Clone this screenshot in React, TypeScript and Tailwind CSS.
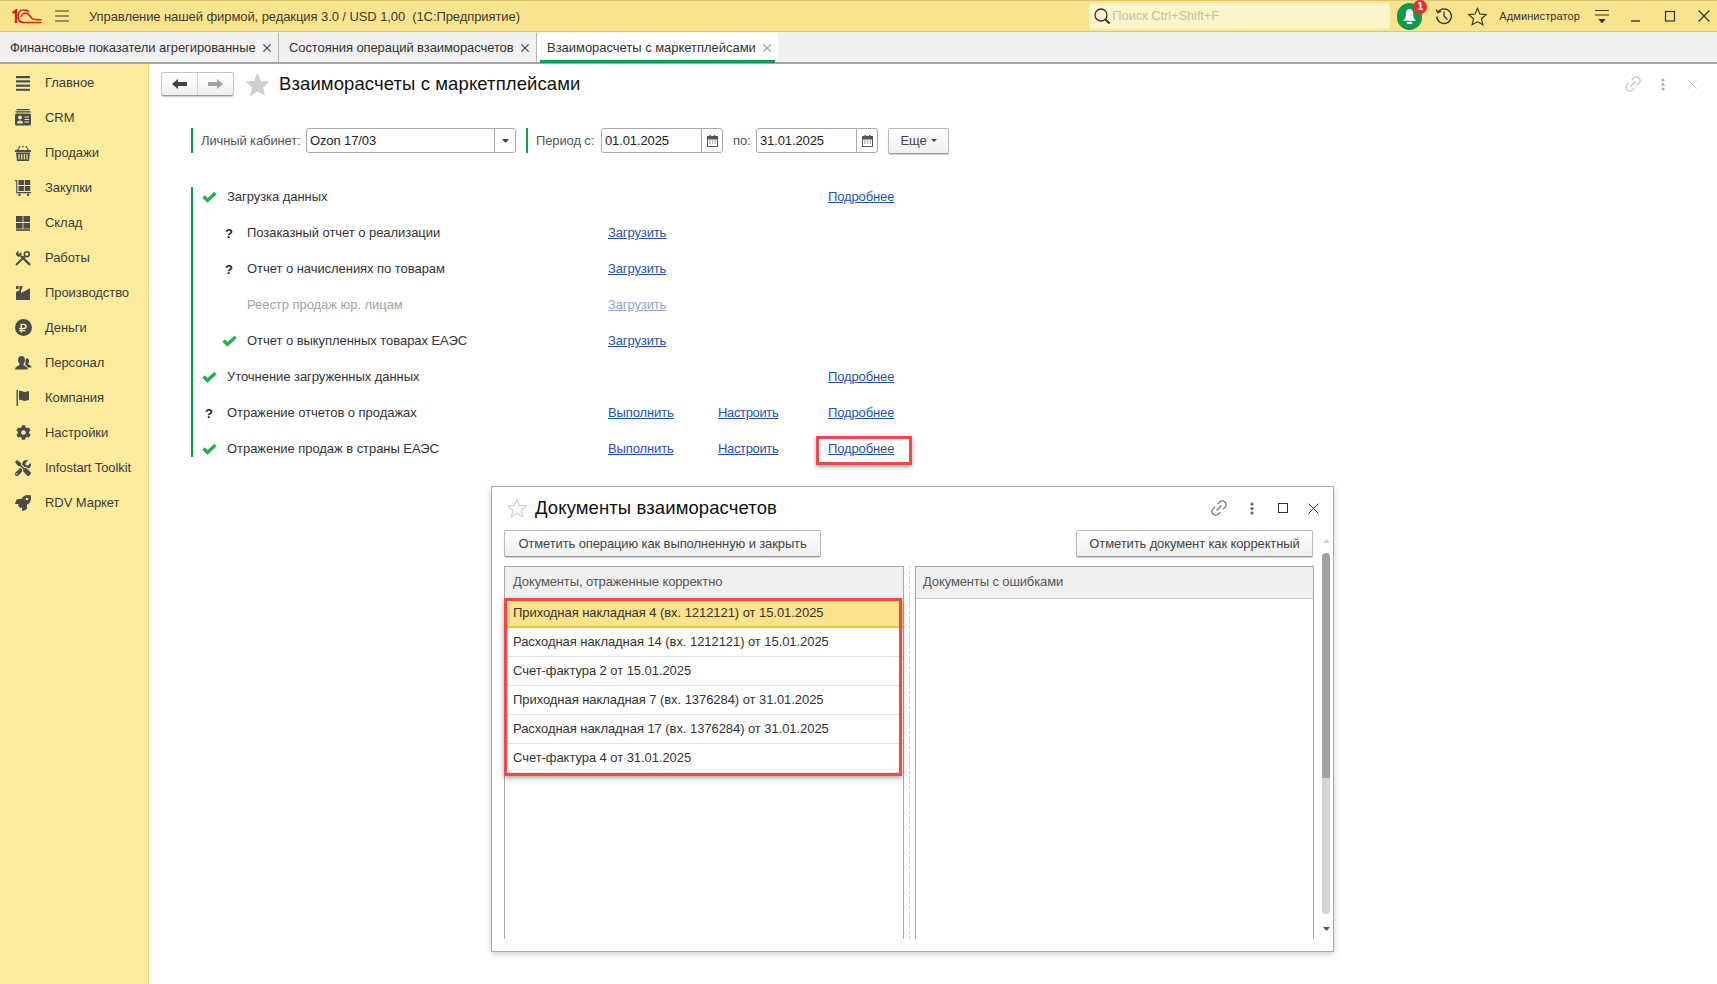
import React from 'react';
import { FaCog, FaTools, FaRocket, FaRubleSign } from 'react-icons/fa';

const ic = 'text-[#4b4b4b]';
const G = '#4b4b4b';
const Bars = () => (<svg width="16" height="16" viewBox="0 0 16 16" fill={G}><rect x="1" y="1" width="14" height="2.2"/><rect x="1" y="5.3" width="14" height="2.2"/><rect x="1" y="9.6" width="14" height="2.2"/><rect x="1" y="13.8" width="14" height="2"/></svg>);
const Card = () => (<svg width="16" height="17" viewBox="0 0 16 17" fill={G}><rect x="1.5" y="0" width="13" height="1.3"/><rect x="0.5" y="2.2" width="15" height="1.3"/><path d="M1.5 4.5h13a1.5 1.5 0 0 1 1.5 1.5v9a1.5 1.5 0 0 1-1.5 1.5h-13A1.5 1.5 0 0 1 0 15V6a1.5 1.5 0 0 1 1.5-1.5z"/><circle cx="5" cy="8.5" r="1.9" fill="#fbeb9c"/><path d="M2 14.5c0-2.2 1.4-3 3-3s3 .8 3 3z" fill="#fbeb9c"/><path d="M9.5 8h4.5M9.5 10.5h4.5M9.5 13h4.5" stroke="#fbeb9c" strokeWidth="1.2"/></svg>);
const Basket = () => (<svg width="16" height="16" viewBox="0 0 16 16" fill={G}><path d="M5.2 1L2.5 5.2M10.8 1l2.7 4.2" stroke={G} strokeWidth="1.2" fill="none"/><path d="M8 0.5l1 1-1 1-1-1z"/><rect x="0" y="5" width="16" height="2"/><path d="M1 7.5h14L14 16H2z"/><path d="M4 9v5.5M6.7 9v5.5M9.3 9v5.5M12 9v5.5" stroke="#fbeb9c" strokeWidth="1.2"/></svg>);
const Cart = () => (<svg width="16" height="16" viewBox="0 0 16 16" fill={G}><path d="M0 0h2.3v12H16v1.2H1.2V1.2H0z"/><rect x="3.5" y="0" width="5.4" height="5"/><rect x="9.8" y="0" width="5.4" height="5"/><rect x="3.5" y="6" width="5.4" height="5"/><rect x="9.8" y="6" width="5.4" height="5"/><circle cx="4.5" cy="14.8" r="1.2"/><circle cx="13" cy="14.8" r="1.2"/></svg>);
const Store = () => (<svg width="16" height="16" viewBox="0 0 16 16" fill={G}><rect x="1" y="1" width="6.6" height="6"/><rect x="8.4" y="1" width="6.6" height="6"/><rect x="1" y="8" width="6.6" height="5.6"/><rect x="8.4" y="8" width="6.6" height="5.6"/><rect x="1" y="14.2" width="14" height="1.6"/></svg>);
const Work = () => (<svg width="16" height="16" viewBox="0 0 16 16" fill="none" stroke={G}><path d="M1 15L10 6" strokeWidth="1.8"/><path d="M15 15L6 6" strokeWidth="2.4"/><circle cx="11.8" cy="4.2" r="2.4" strokeWidth="1.6"/><path d="M3.3 1.2a3 3 0 0 0-1.9 3.6a3 3 0 0 0 3.6 1.4a3 3 0 0 0 1-3.8L4.2 4.2 3 3.2z" fill={G} strokeWidth="0.6"/></svg>);
const Factory = () => (<svg width="16" height="16" viewBox="0 0 16 16" fill={G}><path d="M1 1h2.6v3H1zM4.5 1h3.2l-1 3.6-2.2 1.2z" /><path d="M1 15V7l5-2.6V8L15 3.2V15z"/></svg>);
const Ruble = () => (<span className="flex h-[17px] w-[17px] items-center justify-center rounded-full bg-[#4b4b4b] text-[#fbeb9c]"><FaRubleSign size={10} /></span>);
const People = () => (<svg width="17" height="16" viewBox="0 0 17 16" fill={G}><path d="M11.5 3.2a2.6 3 0 0 1 2.6 3c0 1-.5 2-1.1 2.6.2 1 3.3 1.6 3.6 3.6h-3.8c-.4-1.6-2-2.2-2.6-2.7 0-.7.3-1.4.3-2.1 0-1.3-.4-3 1-4.4z"/><path d="M6.5 1a3.4 4 0 0 1 3.4 4c0 1.6-.6 3-1.4 3.7v1c0 1 4.5 1.6 4.5 4.8H0c0-3.2 4.5-3.8 4.5-4.8v-1C3.7 8 3.1 6.6 3.1 5A3.4 4 0 0 1 6.5 1z"/></svg>);
const Flag = () => (<svg width="14" height="16" viewBox="0 0 14 16" fill={G}><rect x="0.5" y="0" width="1.4" height="16"/><path d="M3 1c2-.8 3.5 1 5.5 1 1.5 0 3-.8 4.5-1v9c-2 .3-3 .9-4.5.9-2 0-3.5-1.5-5.5-.9z"/></svg>);

const nav: [string, React.ReactNode][] = [
  ['Главное', <Bars />],
  ['CRM', <Card />],
  ['Продажи', <Basket />],
  ['Закупки', <Cart />],
  ['Склад', <Store />],
  ['Работы', <Work />],
  ['Производство', <Factory />],
  ['Деньги', <Ruble />],
  ['Персонал', <People />],
  ['Компания', <Flag />],
  ['Настройки', <FaCog size={15} className={ic} />],
  ['Infostart Toolkit', <FaTools size={16} className={ic} />],
  ['RDV Маркет', <FaRocket size={16} className={ic} />],
];

const Check = () => (<svg width="15" height="12" viewBox="0 0 15 12"><path d="M1.5 5.5L5.5 9.5L13.5 2" fill="none" stroke="#25b24a" strokeWidth="3.4" /></svg>);
const Q = () => <span className="text-[13px] font-bold leading-none text-[#222]">?</span>;
const Link = ({ children, dim, className = '' }: { children: React.ReactNode; dim?: boolean; className?: string }) => (
  <a className={`underline ${dim ? 'text-[#8aa6dc]' : 'text-[#1a56ad]'} ${className}`}>{children}</a>
);
const Calendar = () => (<svg width="11" height="12" viewBox="0 0 11 12"><rect x="0.5" y="1.5" width="10" height="10" fill="none" stroke="#555"/><rect x="0.5" y="1.5" width="10" height="3" fill="#555"/><rect x="2.5" y="0" width="1.4" height="3" fill="#555"/><rect x="7" y="0" width="1.4" height="3" fill="#555"/><path d="M2 6h1.5M4.8 6h1.5M7.6 6h1.5M2 8h1.5M4.8 8h1.5M7.6 8h1.5" stroke="#777"/></svg>);
const LinkIcon = ({ c }: { c: string }) => (<svg width="18" height="18" viewBox="0 0 18 18" fill="none" stroke={c} strokeWidth="1.1"><path d="M7.6 5.2l2.5-2.5a3.1 3.1 0 0 1 4.4 0l.8.8a3.1 3.1 0 0 1 0 4.4l-2.5 2.5"/><path d="M10.4 12.8l-2.5 2.5a3.1 3.1 0 0 1-4.4 0l-.8-.8a3.1 3.1 0 0 1 0-4.4l2.5-2.5"/><path d="M6.5 11.5l5-5"/></svg>);
const Dots = ({ c }: { c: string }) => (<svg width="4" height="13" viewBox="0 0 4 13" fill={c}><circle cx="2" cy="2" r="1.6"/><circle cx="2" cy="6.5" r="1.6"/><circle cx="2" cy="11" r="1.6"/></svg>);
const Cross = ({ c, s = 11, w = 1 }: { c: string; s?: number; w?: number }) => (<svg width={s} height={s} viewBox="0 0 11 11" stroke={c} strokeWidth={w}><path d="M.5.5l10 10M10.5.5l-10 10"/></svg>);
const Star = ({ s, fill, stroke }: { s: number; fill: string; stroke: string }) => (<svg width={s} height={s} viewBox="0 0 24 24" fill={fill} stroke={stroke} strokeWidth="1.4"><path d="M12 1.6l3.1 7.3 7.9.7-6 5.2 1.8 7.7L12 18.4l-6.8 4.1L7 14.8 1 9.6l7.9-.7z"/></svg>);

const Bar = ({ className = '' }: { className?: string }) => <div className={`w-[2px] self-stretch bg-[#0f9b55] ${className}`} />;

const Row = ({ icon, level, text, dim, a, b, c, dimA }: { icon?: React.ReactNode; level: 0 | 1; text: string; dim?: boolean; a?: string; b?: string; c?: string; dimA?: boolean }) => (
  <div className="flex h-9 items-center">
    <div className={`mr-[3px] flex w-[30px] shrink-0 items-center justify-center ${level === 0 ? '' : 'ml-[20px]'}`}>{icon}</div>
    <div className={`${level === 0 ? 'w-[381px]' : 'w-[361px]'} shrink-0 tracking-[-0.05px] ${dim ? 'text-[#a3a3a3]' : 'text-[#333]'}`}>{text}</div>
    <div className="w-[110px] shrink-0">{a && <Link dim={dimA}>{a}</Link>}</div>
    <div className="w-[110px] shrink-0">{b && <Link className="tracking-[-0.35px]">{b}</Link>}</div>
    <div>{c && <Link>{c}</Link>}</div>
  </div>
);

const Docs = [
  'Приходная накладная 4 (вх. 1212121) от 15.01.2025',
  'Расходная накладная 14 (вх. 1212121) от 15.01.2025',
  'Счет-фактура 2 от 15.01.2025',
  'Приходная накладная 7 (вх. 1376284) от 31.01.2025',
  'Расходная накладная 17 (вх. 1376284) от 31.01.2025',
  'Счет-фактура 4 от 31.01.2025',
];

const Tab = ({ text, w }: { text: string; w: string }) => (
  <div className={`flex h-full items-center justify-between border-r border-[#b5b5b5] pl-[10px] pr-[7px] ${w}`}>
    <span className="tracking-[-0.09px] text-[#333]">{text}</span>
    <Cross c="#444" s={8} w={1.6} />
  </div>
);

const Btn = ({ children, className = '' }: { children: React.ReactNode; className?: string }) => (
  <div className={`flex items-center justify-center rounded-[2px] border border-[#b9b9b9] border-b-[#9a9a9a] bg-gradient-to-b from-white to-[#efefef] text-[#444] shadow-[0_1px_1px_rgba(0,0,0,0.2)] ${className}`}>{children}</div>
);

const Field = ({ value, w, iconW, icon }: { value: string; w: string; iconW: string; icon: React.ReactNode }) => (
  <div className={`flex h-[25px] items-center rounded-[3px] border border-[#a9a9a9] bg-white ${w}`}>
    <div className="flex-1 pl-[3px] text-[#222]">{value}</div>
    <div className={`flex h-full items-center justify-center border-l border-[#a9a9a9] ${iconW}`}>{icon}</div>
  </div>
);

export default function App() {
  return (
    <div className="relative flex h-[984px] w-[1717px] flex-col overflow-hidden bg-white font-['Liberation_Sans',Arial,sans-serif] text-[13px] tracking-[-0.12px]">
      <header className="flex h-[32px] shrink-0 items-center border-t border-b border-t-[#dcc66a] border-b-[#d8c77c] bg-[#f9e48e]">
        <svg width="30" height="15" viewBox="0 0 30 15" className="ml-[12px]" fill="none" stroke="#d8201c">
          <path d="M0.5 4L4 1.5V14" strokeWidth="2.4"/>
          <path d="M17 3C15.5 1.5 13.5 1 11.5 1C8 1 6 3.5 6 7.5C6 11.5 8.5 13.5 12 13.5H29.5" strokeWidth="1.7"/>
          <path d="M9.5 8C9.5 5.5 11.5 4 13.5 4C17 4 17.5 7 19.5 9C20.7 10.3 23 10.8 29.5 10.8" strokeWidth="1.6"/>
        </svg>
        <svg width="14" height="12" viewBox="0 0 14 12" className="ml-[13px]" stroke="#3a3a3a" strokeWidth="1.2"><path d="M0 1h14M0 6h14M0 11h14"/></svg>
        <div className="ml-[20px] pt-[1px] tracking-[-0.08px] text-[#3a3a3a]">Управление нашей фирмой, редакция 3.0 / USD 1,00&nbsp; (1С:Предприятие)</div>
        <div className="ml-auto flex h-[26px] w-[301px] items-center rounded-[2px] bg-[#fdf5ca] pl-[4px] text-[#c4c0a8]">
          <svg width="18" height="18" viewBox="0 0 18 18" fill="none" stroke="#333" strokeWidth="1.3"><circle cx="8" cy="8" r="6"/><path d="M12.5 12.5L16.5 16.5" strokeWidth="2"/></svg>
          <span className="ml-[1px]">Поиск Ctrl+Shift+F</span>
        </div>
        <div className="relative ml-[7px] flex h-[27px] w-[25px] items-center justify-center rounded-full bg-[#0d9a4f]">
          <svg width="17" height="17" viewBox="0 0 15 16" fill="#fff"><path d="M7.5 1C4.8 1 4 3.5 4 6.5C4 9.5 3 11 1 12H14C12 11 11 9.5 11 6.5C11 3.5 10.2 1 7.5 1Z"/><rect x="5" y="13" width="5" height="2"/></svg>
          <span className="absolute right-[-5px] top-[-3px] flex h-[14px] w-[14px] items-center justify-center rounded-full bg-[#ee2a2a] text-[11px] font-bold text-white">1</span>
        </div>
        <svg width="18" height="18" viewBox="0 0 18 18" className="ml-[13px]" fill="none" stroke="#333" strokeWidth="1.3"><path d="M3 5a7.3 7.3 0 1 1-1.3 4.5"/><path d="M1 2.5l2 3.2 3-1.6" /><path d="M9 4.5V9l3.5 3.5"/></svg>
        <span className="ml-[15px] flex"><Star s={19} fill="none" stroke="#333" /></span>
        <span className="ml-[12px] text-[11px] tracking-[0.1px] text-[#333]">Администратор</span>
        <svg width="14" height="14" viewBox="0 0 14 14" className="ml-[15px]" stroke="#333" fill="#333" strokeWidth="1.2"><path d="M0 1.5h14M0 6h14M4.5 10.5h5l-2.5 3z"/></svg>
        <svg width="12" height="12" viewBox="0 0 12 12" className="ml-[21px]" stroke="#333" strokeWidth="1.4"><path d="M1 11h9"/></svg>
        <svg width="12" height="12" viewBox="0 0 12 12" className="ml-[22px]" stroke="#333" fill="none" strokeWidth="1.2"><rect x="1.5" y="1.5" width="9" height="9.5"/></svg>
        <svg width="12" height="12" viewBox="0 0 11 11" className="ml-[22px] mr-[7px]" stroke="#333" strokeWidth="1.1"><path d="M.5.5l10 10M10.5.5l-10 10"/></svg>
      </header>

      <div className="flex h-[32px] shrink-0 items-stretch border-b-2 border-[#a6a6a6] bg-[#f0f0f0] pt-[1px]">
        <Tab text="Финансовые показатели агрегированные" w="w-[279px]" />
        <Tab text="Состояния операций взаиморасчетов" w="w-[258px]" />
        <div className="relative flex w-[241px] items-center justify-between bg-white pl-[10px] pr-[7px]">
          <span className="tracking-[-0.03px] text-[#333]">Взаиморасчеты с маркетплейсами</span>
          <Cross c="#999" s={8} w={1.6} />
          <div className="absolute bottom-[-1px] left-[3px] right-[3px] h-[3px] bg-[#0f9b55]" />
        </div>
      </div>

      <div className="flex min-h-0 flex-1">
        <aside className="flex w-[149px] shrink-0 flex-col border-r border-[#e6d57f] bg-[#fbeb9c] pt-[1px] tracking-[-0.06px]">
          {nav.map(([label, icon]) => (
            <div key={label} className="flex h-[35px] items-center">
              <div className="flex w-[45px] shrink-0 items-center justify-center pl-[1px]">{icon}</div>
              <span className="text-[#3c3c3c]">{label}</span>
            </div>
          ))}
        </aside>

        <main className="flex flex-1 flex-col pl-[42px]">
          <div className="flex h-[40px] shrink-0 items-center">
            <div className="-ml-[30px] flex h-[24px] w-[73px] rounded-[3px] border border-[#c4c4c4] border-b-[#9a9a9a] bg-gradient-to-b from-white to-[#efefef] shadow-[0_1px_1px_rgba(0,0,0,0.2)]">
              <div className="flex flex-1 items-center justify-center border-r border-[#d4d4d4]">
                <svg width="15" height="12" viewBox="0 0 15 12" fill="#444"><path d="M0 6l6-5v3h9v4H6v3z"/></svg>
              </div>
              <div className="flex flex-1 items-center justify-center">
                <svg width="15" height="12" viewBox="0 0 15 12" fill="#a0a0a0"><path d="M15 6L9 1v3H0v4h9v3z"/></svg>
              </div>
            </div>
            <span className="ml-[12px] flex"><Star s={23} fill="#cfcfcf" stroke="#cfcfcf" /></span>
            <h1 className="ml-[10px] mt-[1px] text-[18.5px] leading-none tracking-[0.1px] text-[#111]">Взаиморасчеты с маркетплейсами</h1>
            <div className="ml-auto mr-[20px] flex items-center">
              <LinkIcon c="#bdbdbd" />
              <span className="ml-[19px] flex"><Dots c="#b0b0b0" /></span>
              <span className="ml-[23px] flex"><Cross c="#bdbdbd" s={9} /></span>
            </div>
          </div>

          <div className="mt-[24px] flex h-[25px] items-center">
            <Bar />
            <span className="ml-[8px] w-[105px] shrink-0 whitespace-nowrap text-[#555]">Личный кабинет:</span>
            <Field value="Ozon 17/03" w="w-[210px]" iconW="w-[21px]" icon={<svg width="7" height="4" viewBox="0 0 7 4" fill="#444"><path d="M0 0h7L3.5 4z"/></svg>} />
            <Bar className="ml-[10px]" />
            <span className="ml-[8px] w-[65px] shrink-0 whitespace-nowrap text-[#555]">Период с:</span>
            <Field value="01.01.2025" w="w-[122px]" iconW="w-[21px]" icon={<Calendar />} />
            <span className="ml-[10px] w-[23px] shrink-0 text-[#555]">по:</span>
            <Field value="31.01.2025" w="w-[122px]" iconW="w-[21px]" icon={<Calendar />} />
            <Btn className="ml-[10px] h-[26px] w-[61px] gap-[4px]">Еще <svg width="6" height="3" viewBox="0 0 6 3" fill="#444"><path d="M0 0h6L3 3z"/></svg></Btn>
          </div>

          <div className="mt-[34px] flex">
            <Bar />
            <div className="-mb-[10px] -mt-[8px] flex-1 pl-[1px]">
              <Row level={0} icon={<Check />} text="Загрузка данных" c="Подробнее" />
              <Row level={1} icon={<Q />} text="Позаказный отчет о реализации" a="Загрузить" />
              <Row level={1} icon={<Q />} text="Отчет о начислениях по товарам" a="Загрузить" />
              <Row level={1} text="Реестр продаж юр. лицам" dim dimA a="Загрузить" />
              <Row level={1} icon={<Check />} text="Отчет о выкупленных товарах ЕАЭС" a="Загрузить" />
              <Row level={0} icon={<Check />} text="Уточнение загруженных данных" c="Подробнее" />
              <Row level={0} icon={<Q />} text="Отражение отчетов о продажах" a="Выполнить" b="Настроить" c="Подробнее" />
              <Row level={0} icon={<Check />} text="Отражение продаж в страны ЕАЭС" a="Выполнить" b="Настроить" c="Подробнее" />
            </div>
          </div>
        </main>
      </div>

      {/* highlight over the "Подробнее" link */}
      <div className="absolute left-[816px] top-[436px] h-[29px] w-[96px] border-[3px] border-[#f4474a] shadow-[0_2px_4px_rgba(0,0,0,0.35)]" />

      {/* dialog */}
      <div className="absolute left-[491px] top-[486px] flex h-[466px] w-[843px] flex-col border border-[#a8a8a8] bg-white px-[12px] shadow-[0_2px_6px_rgba(0,0,0,0.2)]">
        <div className="flex h-[42px] shrink-0 items-center pr-[2px]">
          <span className="ml-[3px] flex"><Star s={20} fill="none" stroke="#cfcfcf" /></span>
          <h2 className="ml-[8px] mt-[1px] text-[18.5px] leading-none tracking-[0.1px] text-[#111]">Документы взаиморасчетов</h2>
          <div className="ml-auto flex items-center">
            <LinkIcon c="#666" />
            <span className="ml-[22px] flex"><Dots c="#666" /></span>
            <span className="ml-[24px] h-[10px] w-[10px] border border-[#333]" />
            <span className="ml-[20px] flex"><Cross c="#333" /></span>
          </div>
        </div>
        <div className="mt-[1px] flex h-[27px] shrink-0 justify-between pr-[8px]">
          <Btn className="w-[317px]">Отметить операцию как выполненную и закрыть</Btn>
          <Btn className="w-[237px]">Отметить документ как корректный</Btn>
        </div>
        <div className="mt-[9px] flex min-h-0 flex-1 pb-[12px]">
          <div className="flex w-[400px] shrink-0 flex-col border-x border-t border-[#a8a8a8]">
            <div className="flex h-[32px] shrink-0 items-center border-b border-[#c9c9c9] bg-[#f0f0f0] pb-[1px] pl-[8px] text-[#555]">Документы, отраженные корректно</div>
            {Docs.map((d, i) => (
              <div key={d} className={`flex h-[29px] shrink-0 items-center pl-[8px] tracking-[-0.06px] text-[#333] ${i === 0 ? 'border-b-2 border-[#f2c430] bg-[#fbe28c]' : 'border-b border-[#e4e4e4]'}`}>{d}</div>
            ))}
          </div>
          <div className="mx-[5px] w-0 border-l border-dashed border-[#cfcfcf]" />
          <div className="flex w-[399px] shrink-0 flex-col border-x border-t border-[#a8a8a8]">
            <div className="flex h-[32px] shrink-0 items-center border-b border-[#c9c9c9] bg-[#f0f0f0] pb-[1px] pl-[7px] text-[#555]">Документы с ошибками</div>
          </div>
        </div>
        <div className="absolute right-[3px] top-[52px] bottom-[20px] flex w-[8px] flex-col items-center">
          <svg width="7" height="4" viewBox="0 0 7 4" fill="#d0d0d0" className="shrink-0"><path d="M0 4h7L3.5 0z"/></svg>
          <div className="mt-[10px] h-[225px] w-full shrink-0 rounded-t-[4px] bg-[#a0a0a0]" />
          <div className="h-[136px] w-full shrink-0 rounded-b-[4px] bg-[#d4d4d4]" />
          <svg width="7" height="4" viewBox="0 0 7 4" fill="#555" className="mt-auto shrink-0"><path d="M0 0h7L3.5 4z"/></svg>
        </div>
      </div>

      {/* highlight over the list rows */}
      <div className="absolute left-[504px] top-[598px] h-[178px] w-[398px] border-[3px] border-[#f4474a] shadow-[0_2px_5px_rgba(0,0,0,0.35)]" />
    </div>
  );
}
